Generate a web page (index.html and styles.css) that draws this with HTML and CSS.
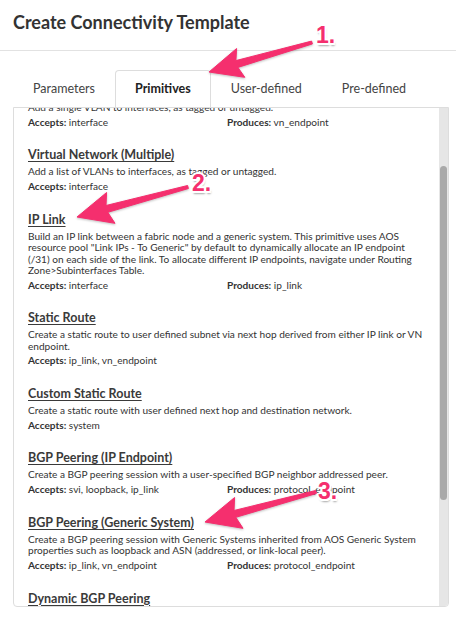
FILE: index.html
```html
<!DOCTYPE html>
<html>
<head>
<meta charset="utf-8">
<title>Create Connectivity Template</title>
<link rel="stylesheet" href="styles.css">
</head>
<body>
<div class="page">
  <header class="header">
    <h1 class="title">Create Connectivity Template</h1>
  </header>
  <nav class="tabs">
    <div class="tab">Parameters</div>
    <div class="tab active">Primitives</div>
    <div class="tab">User-defined</div>
    <div class="tab">Pre-defined</div>
  </nav>
  <div class="panel">
    <div class="viewport">
      <div class="list">
        <section class="item">
          <h3 class="name">Virtual Network (Single)</h3>
          <p class="desc">Add a single VLAN to interfaces, as tagged or untagged.</p>
          <div class="meta"><span><b>Accepts:</b> interface</span><span><b>Produces:</b> vn_endpoint</span></div>
        </section>
        <section class="item">
          <h3 class="name">Virtual Network (Multiple)</h3>
          <p class="desc">Add a list of VLANs to interfaces, as tagged or untagged.</p>
          <div class="meta"><span><b>Accepts:</b> interface</span></div>
        </section>
        <section class="item">
          <h3 class="name">IP Link</h3>
          <p class="desc">Build an IP link between a fabric node and a generic system. This primitive uses AOS<br>resource pool "Link IPs - To Generic" by default to dynamically allocate an IP endpoint<br>(/31) on each side of the link. To allocate different IP endpoints, navigate under Routing<br>Zone&gt;Subinterfaces Table.</p>
          <div class="meta"><span><b>Accepts:</b> interface</span><span><b>Produces:</b> ip_link</span></div>
        </section>
        <section class="item">
          <h3 class="name">Static Route</h3>
          <p class="desc">Create a static route to user defined subnet via next hop derived from either IP link or VN<br>endpoint.</p>
          <div class="meta"><span><b>Accepts:</b> ip_link, vn_endpoint</span></div>
        </section>
        <section class="item">
          <h3 class="name">Custom Static Route</h3>
          <p class="desc">Create a static route with user defined next hop and destination network.</p>
          <div class="meta"><span><b>Accepts:</b> system</span></div>
        </section>
        <section class="item">
          <h3 class="name">BGP Peering (IP Endpoint)</h3>
          <p class="desc">Create a BGP peering session with a user-specified BGP neighbor addressed peer.</p>
          <div class="meta"><span><b>Accepts:</b> svi, loopback, ip_link</span><span><b>Produces:</b> protocol_endpoint</span></div>
        </section>
        <section class="item">
          <h3 class="name">BGP Peering (Generic System)</h3>
          <p class="desc">Create a BGP peering session with Generic Systems inherited from AOS Generic System<br>properties such as loopback and ASN (addressed, or link-local peer).</p>
          <div class="meta"><span><b>Accepts:</b> ip_link, vn_endpoint</span><span><b>Produces:</b> protocol_endpoint</span></div>
        </section>
        <section class="item">
          <h3 class="name">Dynamic BGP Peering</h3>
          <p class="desc">Create a dynamic BGP peering session with a BGP neighbor.</p>
          <div class="meta"><span><b>Accepts:</b> svi, loopback</span><span><b>Produces:</b> protocol_endpoint</span></div>
        </section>
      </div>
    </div>
    <div class="scrollbar"><div class="thumb"></div></div>
  </div>

  <svg class="annotations" width="456" height="621" viewBox="0 0 456 621">
    <g class="arrows">
      <polygon points="209,72 236.6,48.5 235.9,60.6 311.6,41.1 312.4,43.9 237.9,67.4 244.8,77.3"/>
      <polygon points="77,217 106.6,192.5 106,205.5 187.6,185.5 188.4,188.5 107.8,212.3 115,223.3"/>
      <polygon points="205,522 234.6,497.5 234,510.5 315.6,490.5 316.4,493.5 235.8,517.3 243,528.3"/>
    </g>
  </svg>
  <span class="num n1">1.</span>
  <span class="num n2">2.</span>
  <span class="num n3">3.</span>
</div>
</body>
</html>
```

FILE: styles.css
```css
* { box-sizing: border-box; }

html, body {
  margin: 0;
  padding: 0;
  background: #ffffff;
}

body {
  font-family: "Lato", "Open Sans", sans-serif;
  color: #333333;
}

.page {
  position: relative;
  width: 456px;
  height: 621px;
  overflow: hidden;
}

.header {
  height: 51px;
  padding: 11px 13px 0;
  border-bottom: 1px solid #e2e2e2;
}

.title {
  margin: 0;
  font-size: 18px;
  font-weight: 700;
  line-height: normal;
  color: #333333;
}

.tabs {
  display: flex;
  margin: 19px 0 0 13px;
  height: 37px;
}

.tab {
  display: flex;
  align-items: center;
  padding: 0 19px;
  height: 37px;
  padding-bottom: 1px;
  font-size: 12.5px;
  color: #444444;
  border: 1px solid transparent;
  border-bottom: none;
  border-radius: 4px 4px 0 0;
}

.tab.active {
  border-color: #dddddd;
  font-weight: 700;
  color: #222222;
}

.panel {
  display: flex;
  margin-left: 13px;
  width: 436px;
  height: 500px;
  border: 1px solid #dddddd;
  border-radius: 0 0 4px 4px;
  overflow: hidden;
}

.viewport {
  flex: 1;
  overflow: hidden;
  padding: 0 4px 0 14px;
}

.list {
  margin-top: -25px;
}

.item {
  margin-bottom: 19.8px;
}

.name {
  margin: 0 0 3px;
  font-size: 12.5px;
  line-height: 16px;
  font-weight: 700;
  color: #3a3a3a;
  text-decoration: underline;
  text-decoration-thickness: 1px;
  text-underline-offset: 2px;
}

.desc {
  margin: 0 0 2px;
  font-size: 10.1px;
  line-height: 11.5px;
  white-space: nowrap;
  color: #333333;
}

.meta {
  display: grid;
  grid-template-columns: 199px 1fr;
  font-size: 10.1px;
  line-height: 12px;
  color: #333333;
}

.meta b {
  font-weight: 700;
}

.scrollbar {
  width: 9px;
  background: #e6e6e6;
  padding-top: 58px;
}

.thumb {
  margin: 0 1px;
  height: 334px;
  border-radius: 4px;
  background: #a9a9a9;
}

.annotations {
  position: absolute;
  left: 0;
  top: 0;
  pointer-events: none;
}

.arrows polygon {
  fill: #f52f6e;
  stroke: #f52f6e;
  stroke-width: 1;
  stroke-linejoin: round;
  filter: drop-shadow(0 1px 1px rgba(0,0,0,0.25));
}

.num {
  position: absolute;
  font-family: "Liberation Sans", Arial, sans-serif;
  font-weight: 700;
  font-size: 23px;
  line-height: 23px;
  color: #f52f6e;
  text-shadow:
    -1.5px -1.5px 0 #fff, 1.5px -1.5px 0 #fff, -1.5px 1.5px 0 #fff, 1.5px 1.5px 0 #fff,
    0 -2px 0 #fff, 0 2px 0 #fff, -2px 0 0 #fff, 2px 0 0 #fff,
    1px 3px 2px rgba(0,0,0,0.35);
}

.n1 { left: 316px; top: 24px; }
.n2 { left: 192px; top: 172px; }
.n3 { left: 318px; top: 480px; }
```
